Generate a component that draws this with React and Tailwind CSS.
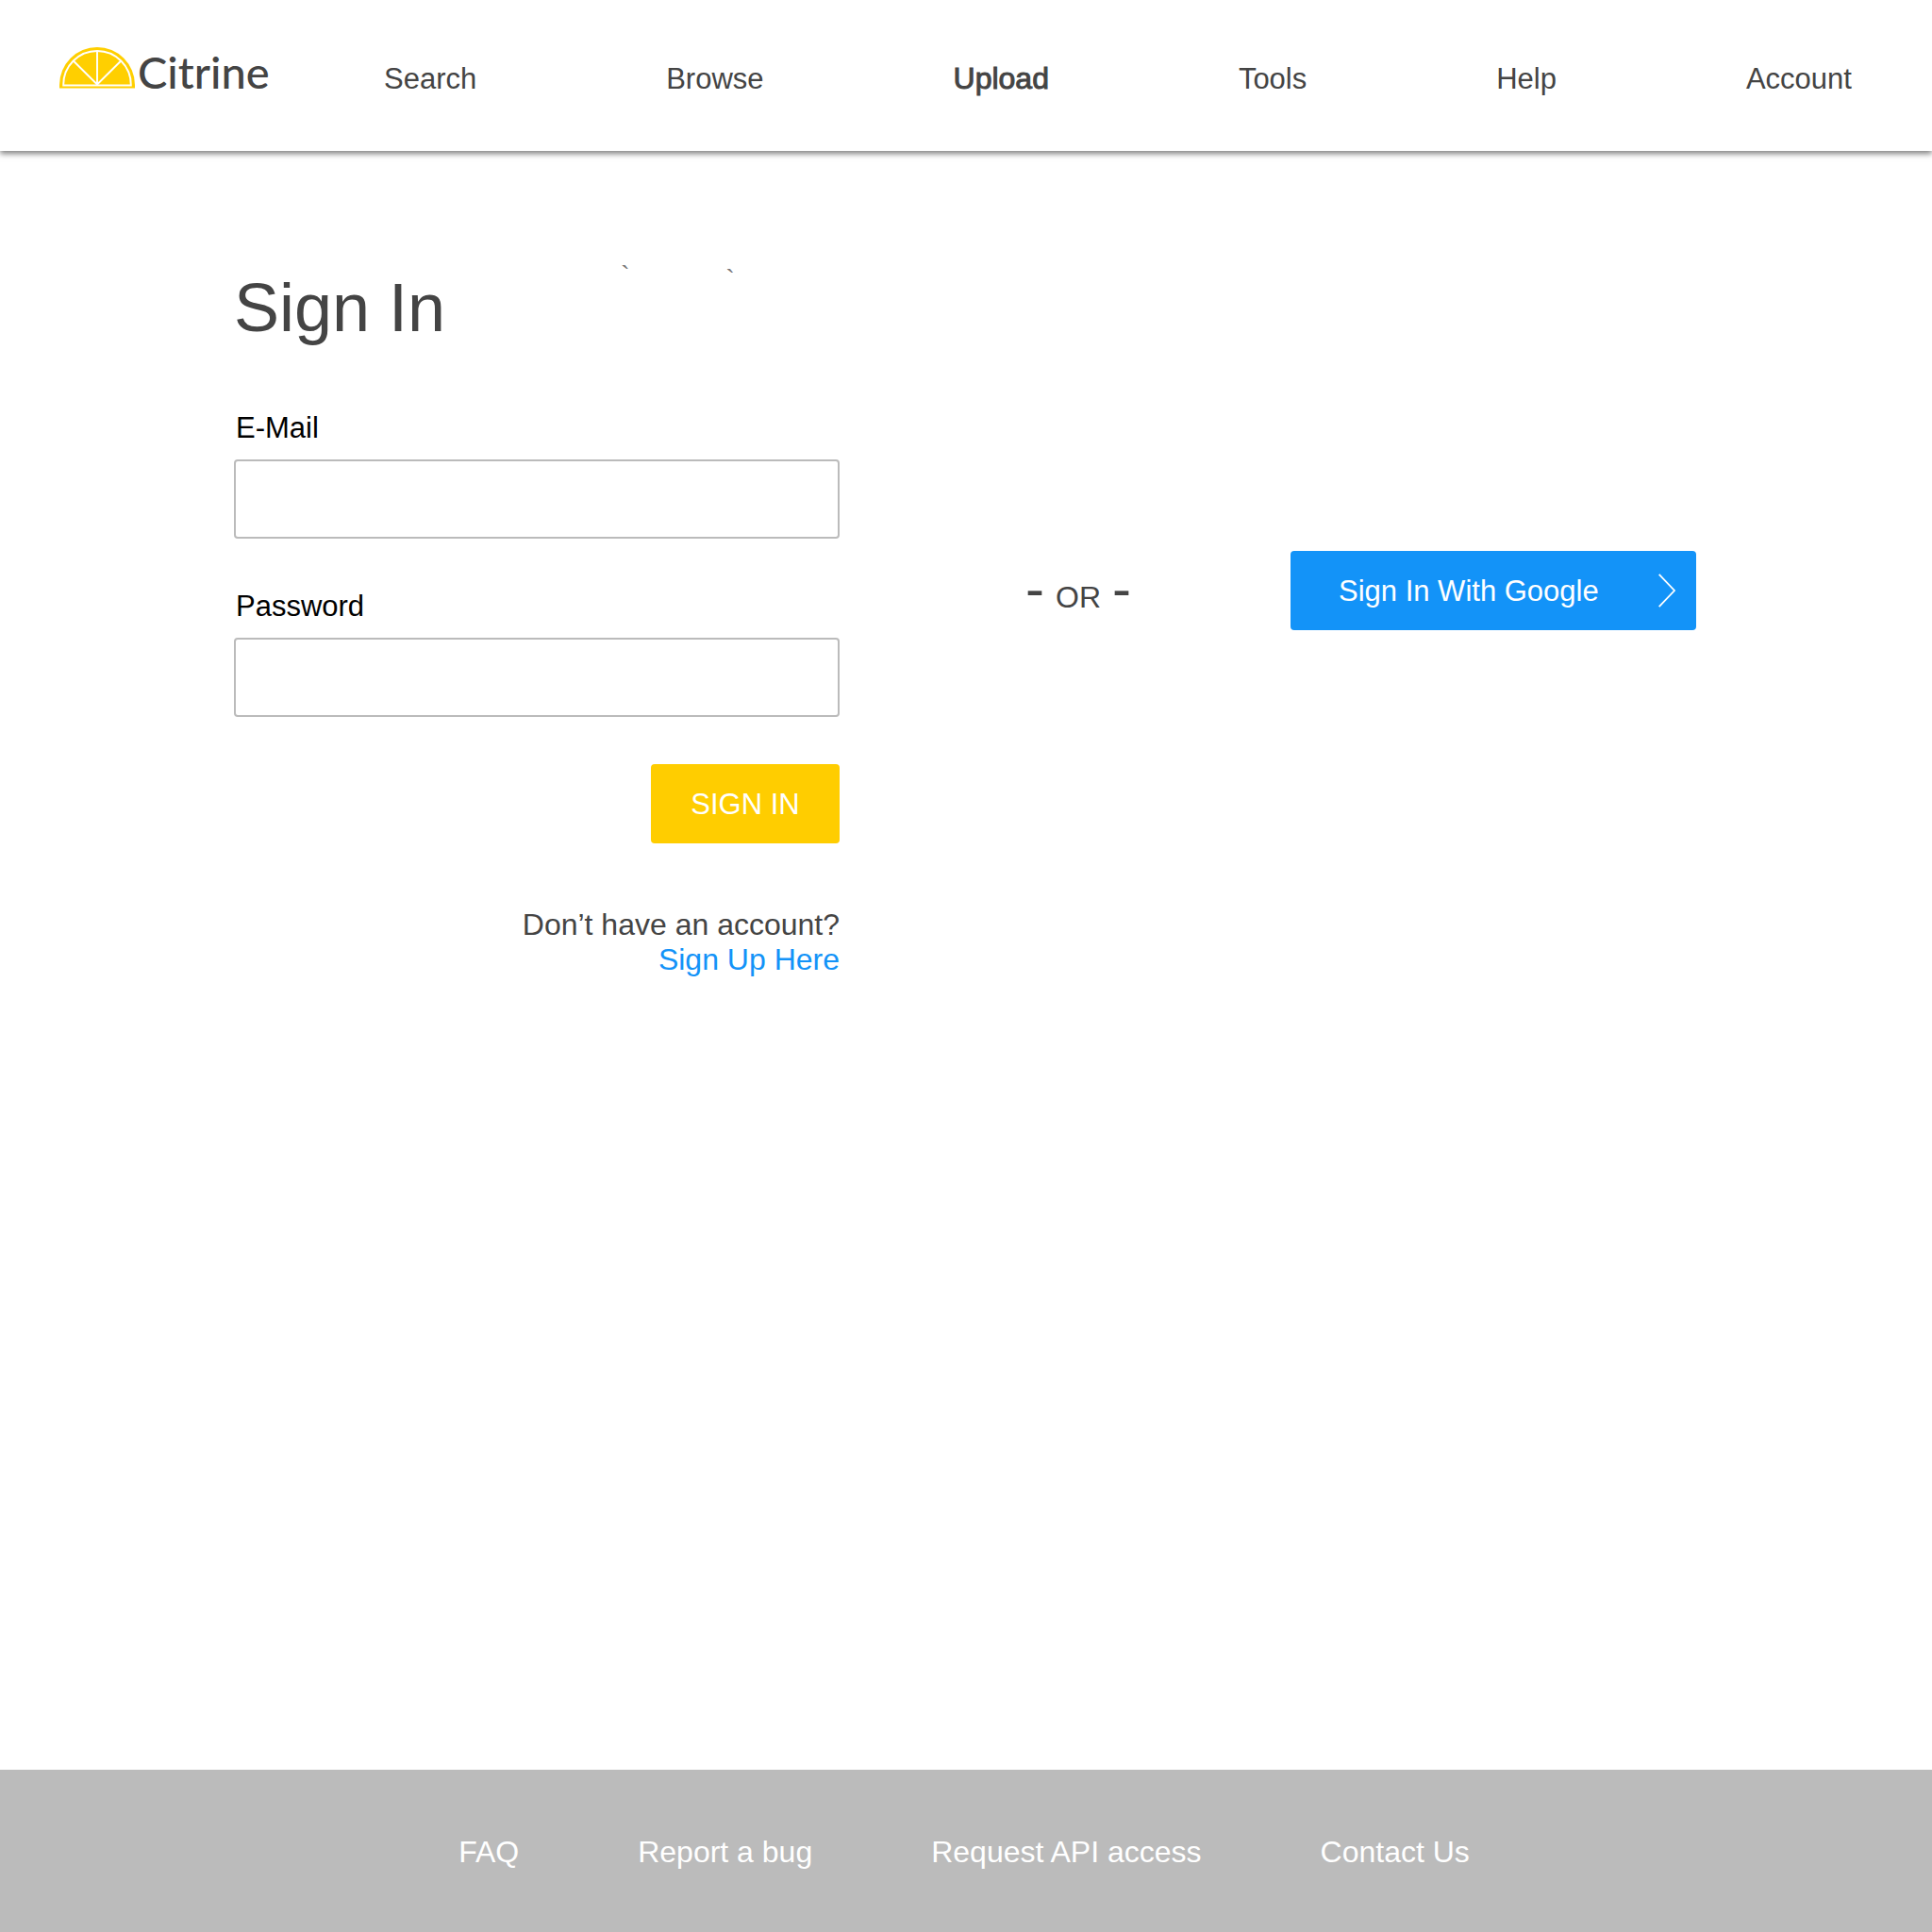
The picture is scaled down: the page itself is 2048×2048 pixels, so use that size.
const navItems = [
  { label: "Search" },
  { label: "Browse" },
  { label: "Upload", current: true },
  { label: "Tools" },
  { label: "Help" },
  { label: "Account" },
];

const footerItems = ["FAQ", "Report a bug", "Request API access", "Contact Us"];

function CitrineMark() {
  return (
    <svg viewBox="0 0 80 44" className="h-11 w-20 shrink-0" aria-hidden="true">
      <path d="M0 43.5V40a40 40 0 0 1 80 0v3.5z" fill="#ffcf00" />
      <g fill="none" stroke="#fff" strokeWidth="1.9">
        <path d="M4.2 40.5V40a35.8 36 0 0 1 71.6 0v.5z" />
        <path d="M40 4v36M40 39.5 14.8 14.5M40 39.5 65.2 14.5" />
      </g>
    </svg>
  );
}

function Header() {
  return (
    <header className="flex h-40 items-start bg-white pl-[63px] pr-[85px] shadow-[0_3px_6px_rgba(0,0,0,0.5)]">
      <a href="#" className="mt-[50px] flex h-11 w-[344px] shrink-0 items-center gap-[3px]">
        <CitrineMark />
        <span className="pt-2 font-['Lato',sans-serif] text-[47px] font-medium leading-none">Citrine</span>
      </a>
      <nav className="mt-[63px] flex grow items-baseline justify-between text-[31px] leading-10">
        {navItems.map(({ label, current }) => (
          <a
            key={label}
            href="#"
            aria-current={current ? "page" : undefined}
            className={current ? "text-[32px] [-webkit-text-stroke:1px_#444]" : ""}
          >
            {label}
          </a>
        ))}
      </nav>
    </header>
  );
}

function Field({ id, label, type }) {
  return (
    <div className="flex flex-col gap-3.5">
      <label htmlFor={id} className="pl-0.5 text-[31px] leading-[38px] text-black">
        {label}
      </label>
      <input
        id={id}
        type={type}
        className="h-[84px] w-full rounded-sm border-2 border-[#bbb] px-4 text-[31px] text-black"
      />
    </div>
  );
}

function SignInForm() {
  return (
    <form className="flex flex-col" onSubmit={(e) => e.preventDefault()}>
      <div className="flex flex-col gap-[53px]">
        <Field id="email" label="E-Mail" type="email" />
        <Field id="password" label="Password" type="password" />
      </div>
      <button
        type="submit"
        className="mt-[50px] h-[84px] w-[200px] self-end rounded-sm bg-[#ffcd00] pt-0.5 text-[31px] text-white"
      >
        SIGN IN
      </button>
      <p className="mt-[68px] text-right text-[32px] leading-[37px]">
        Don’t have an account?
        <br />
        <a href="#" className="text-[#1393f8]">
          Sign Up Here
        </a>
      </p>
    </form>
  );
}

export default function App() {
  return (
    <div className="flex min-h-screen flex-col bg-white font-['Liberation_Sans',Arial,sans-serif] text-[#444]">
      <Header />
      <main className="grow pl-[248px] pr-[250px] pt-[116px]">
        <div className="flex items-start">
          <h1 className="text-[72px] leading-[100px]">Sign In</h1>
          <span className="ml-[186px] text-[28px] leading-8 text-[#777]">`</span>
          <span className="ml-[102px] mt-1 text-[28px] leading-8 text-[#777]">`</span>
        </div>
        <div className="mt-[59px] grid grid-cols-[642fr_478fr_430fr]">
          <SignInForm />
          <p className="mt-[169px] flex h-10 items-baseline justify-center gap-3 pl-7 text-[32px] leading-10">
            <span className="text-[60px] leading-10">-</span>
            OR
            <span className="text-[60px] leading-10">-</span>
          </p>
          <button
            type="button"
            className="mt-[149px] flex h-[84px] items-center justify-between rounded-sm bg-[#1393f8] pl-[51px] pr-[22px] text-[31px] text-white"
          >
            <span className="pt-0.5">Sign In With Google</span>
            <svg viewBox="0 0 18 36" className="h-9 w-[18px]" fill="none" stroke="#fff" strokeWidth="1.8" aria-hidden="true">
              <path d="M.7.8 17 18 .7 35.2" />
            </svg>
          </button>
        </div>
      </main>
      <footer className="flex h-[172px] items-center justify-center gap-[126px] bg-[#bbb] pr-1 pt-0.5 text-[32px] text-white">
        {footerItems.map((label) => (
          <a key={label} href="#">
            {label}
          </a>
        ))}
      </footer>
    </div>
  );
}
